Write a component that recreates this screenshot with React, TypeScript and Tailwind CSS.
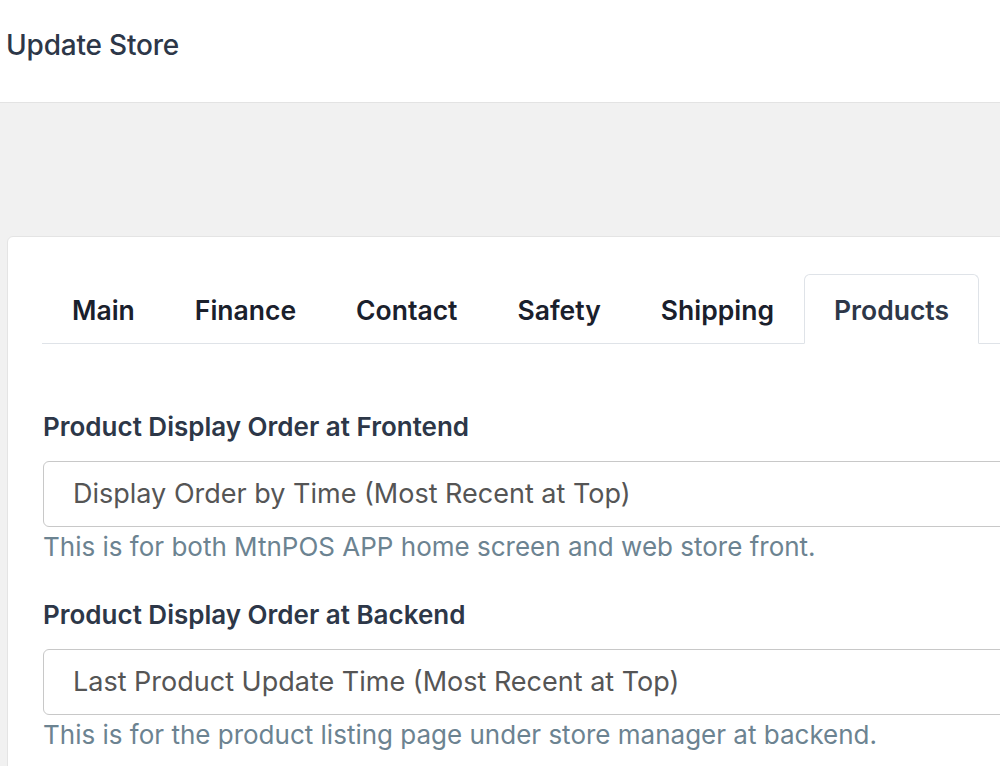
import { useState } from 'react'

const TABS = ['Main', 'Finance', 'Contact', 'Safety', 'Shipping', 'Products']

const FIELDS = [
  {
    label: 'Product Display Order at Frontend',
    value: 'Display Order by Time (Most Recent at Top)',
    help: 'This is for both MtnPOS APP home screen and web store front.',
  },
  {
    label: 'Product Display Order at Backend',
    value: 'Last Product Update Time (Most Recent at Top)',
    help: 'This is for the product listing page under store manager at backend.',
  },
]

export default function App() {
  const [active, setActive] = useState('Products')

  return (
    <div
      className="min-h-[766px] w-[1000px] overflow-hidden bg-[#f1f1f1]"
      style={{ fontFamily: 'Inter, "Noto Sans", sans-serif' }}
    >
      {/* Header */}
      <div className="flex h-[103px] items-center border-b border-[#e3e3e3] bg-white pb-[12px] pl-[6px]">
        <h1 className="text-[28px] font-medium tracking-[-0.2px] text-[#2d3748]">Update Store</h1>
      </div>

      {/* Card */}
      <div className="ml-[7px] mt-[133px] w-[1100px] rounded-md border border-[#e4e4e4] bg-white pl-[34px] pt-[37px] pb-10">
        <ul className="flex border-b border-[#dfe3e8]">
          {TABS.map((t) => (
            <li key={t}>
              <button
                onClick={() => setActive(t)}
                className={`-mb-px h-[70px] rounded-t-md border px-[29px] pt-[4px] text-[26.5px] font-semibold ${
                  active === t
                    ? 'border-[#dfe3e8] border-b-white text-[#2d3748]'
                    : 'border-transparent text-[#1a202c]'
                }`}
              >
                {t}
              </button>
            </li>
          ))}
        </ul>

        <div className="mt-[65px] pl-px">
          {FIELDS.map((f) => (
            <div key={f.label} className="mb-[31px]">
              <label className="block text-[26px] leading-[36px] font-semibold text-[#2d3748]">{f.label}</label>
              <div className="mt-[16px] flex h-[66px] w-[1000px] items-center rounded-md border border-[#c8c8c8] pl-[29px] text-[27px] text-[#555555]">
                {f.value}
              </div>
              <p className="text-[26px] leading-[39px] text-[#6c8391]">{f.help}</p>
            </div>
          ))}
        </div>
      </div>
    </div>
  )
}
